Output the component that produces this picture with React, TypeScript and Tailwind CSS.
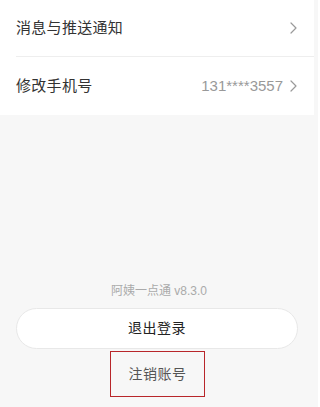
import React from "react";

const Chevron = () => (
  <svg width="7" height="12" viewBox="0 0 7 12" fill="none" className="shrink-0">
    <path d="M1 1l5 5-5 5" stroke="#9a9a9a" strokeWidth="1.2" strokeLinecap="round" strokeLinejoin="round" />
  </svg>
);

export default function App() {
  const font = { fontFamily: '"Liberation Sans", "Noto Sans CJK SC", sans-serif' };
  return (
    <div className="w-[318px] h-[407px] bg-[#f7f7f7] flex flex-col overflow-hidden" style={font}>
      <div className="w-[314px] bg-white">
        <div className="h-[56px] flex items-center justify-between pl-4 pr-[17px]">
          <span className="text-[15px] text-[#333] tracking-[0.3px]">消息与推送通知</span>
          <Chevron />
        </div>
        <div className="ml-4 h-px bg-[#eeeeee]" />
        <div className="h-[58px] flex items-center justify-between pl-4 pr-[17px]">
          <span className="text-[15px] text-[#333] tracking-[0.3px]">修改手机号</span>
          <div className="flex items-center gap-[7px]">
            <span className="text-[15px] text-[#999]">131****3557</span>
            <Chevron />
          </div>
        </div>
      </div>
      <div className="mt-[168px] h-[17px] leading-[17px] text-center text-[12px] text-[#aaa]">
        阿姨一点通 v8.3.0
      </div>
      <div className="mt-[8px] mx-4 w-[282px] h-[41px] rounded-full bg-white border border-[#e8e8e8] flex items-center justify-center text-[14px] text-[#222] tracking-[0.5px]">
        退出登录
      </div>
      <div className="mt-[2px] ml-[110px] w-[95px] h-[46px] border border-[#b8262a] flex items-center justify-center text-[14px] text-[#555] tracking-[0.5px]">
        注销账号
      </div>
    </div>
  );
}
